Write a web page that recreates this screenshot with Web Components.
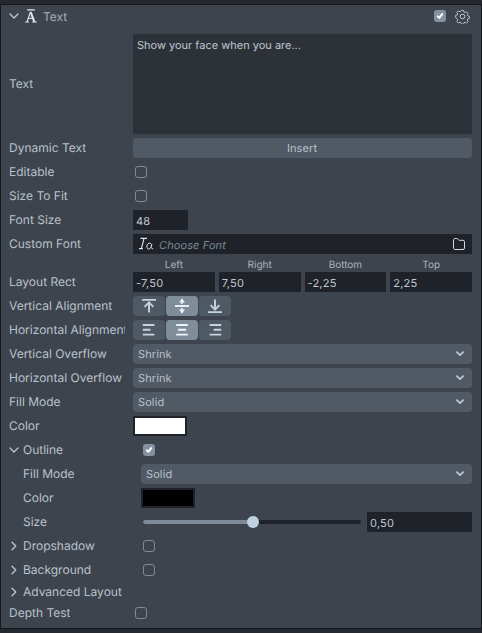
<!DOCTYPE html>
<html><head><meta charset="utf-8"><style>
html,body{margin:0;padding:0;height:100%;background:#25282e;overflow:hidden}
body{font:12px/16px Inter,"Noto Sans",sans-serif;color:#b9c1cb;text-rendering:geometricPrecision}
</style></head><body>
<insp-panel>
  <insp-header>Text</insp-header>
  <insp-row label="Text" h="100"><insp-area>Show your face when you are...</insp-area></insp-row>
  <insp-row label="Dynamic Text"><insp-button>Insert</insp-button></insp-row>
  <insp-row label="Editable"><insp-check></insp-check></insp-row>
  <insp-row label="Size To Fit"><insp-check></insp-check></insp-row>
  <insp-row label="Font Size"><insp-input w="55">48</insp-input></insp-row>
  <insp-row label="Custom Font"><insp-font></insp-font></insp-row>
  <insp-rect></insp-rect>
  <insp-row label="Vertical Alignment"><insp-seg kind="v"></insp-seg></insp-row>
  <insp-row label="Horizontal Alignment"><insp-seg kind="h"></insp-seg></insp-row>
  <insp-row label="Vertical Overflow"><insp-select>Shrink</insp-select></insp-row>
  <insp-row label="Horizontal Overflow"><insp-select>Shrink</insp-select></insp-row>
  <insp-row label="Fill Mode"><insp-select>Solid</insp-select></insp-row>
  <insp-row label="Color"><insp-color value="#fff"></insp-color></insp-row>
  <insp-row label="Outline" fold="open" indent="1"><insp-check checked></insp-check></insp-row>
  <insp-row label="Fill Mode" indent="1"><insp-select>Solid</insp-select></insp-row>
  <insp-row label="Color" indent="1"><insp-color value="#000"></insp-color></insp-row>
  <insp-row label="Size" indent="1"><insp-slider></insp-slider></insp-row>
  <insp-row label="Dropshadow" fold="closed" indent="1"><insp-check></insp-check></insp-row>
  <insp-row label="Background" fold="closed" indent="1"><insp-check></insp-check></insp-row>
  <insp-row label="Advanced Layout" fold="closed" indent="1" rh="20"></insp-row>
  <insp-row label="Depth Test" rh="22"><insp-check></insp-check></insp-row>
</insp-panel>
<script>
const def=(name,css,html,init)=>customElements.define(name,class extends HTMLElement{
  connectedCallback(){ if(this.shadowRoot)return; const r=this.attachShadow({mode:'open'});
    r.innerHTML='<style>'+css+'</style>'+(typeof html==='function'?html(this):html); if(init)init(this,r);}
});
const chev='<svg width="10" height="10" viewBox="0 0 10 10" fill="none" stroke="#bfc7d1" stroke-width="1.3" stroke-linecap="round" stroke-linejoin="round"><path d="M1 3 5 7 9 3"/></svg>';
const chevR='<svg width="10" height="10" viewBox="0 0 10 10" fill="none" stroke="#bfc7d1" stroke-width="1.3" stroke-linecap="round" stroke-linejoin="round"><path d="M3 1.2 6.8 5 3 8.8"/></svg>';
const chevS='<svg width="8" height="6" viewBox="0 0 8 6" fill="none" stroke="#bcc8d6" stroke-width="1.7" stroke-linecap="round" stroke-linejoin="round"><path d="M.9 1.2 4 4.2 7.1 1.2"/></svg>';
const tick='<svg width="12" height="12" viewBox="0 0 12 12" fill="none" stroke="#fff" stroke-width="1.9" stroke-linecap="round" stroke-linejoin="round"><path d="M3.8 6.3 5.3 7.8 8.2 4.1"/></svg>';
def('insp-panel',`:host{display:block;margin:4px 0 0;height:625px;box-sizing:border-box;background:#3e444d;border:1px solid #15171a}
  .b{display:flex;flex-direction:column}`,'<div class="b"><slot></slot></div>');
def('insp-header',`:host{display:flex;align-items:center;height:27px;box-sizing:border-box;padding:0 11px 5px 8px;color:#a6afba}
  .t{margin-left:6px;padding-top:1px}.a{margin-left:6px;display:block}.sp{flex:1}.g{display:block;margin-left:9px}
  .c{width:12px;height:12px;border-radius:3px;background:#8591a0;display:flex;align-items:center;justify-content:center}`,
  `${chev}<svg class="a" width="12" height="14" viewBox="0 0 12 14" fill="none" stroke="#e4e8ec"><path d="M2.2 .9h7.6" stroke-width="1.3"/><path d="M.2 13h3.8M7.2 13h4.6" stroke-width="1.2"/><path d="M2 13 5.3 3.3h.9" stroke-width="1.1"/><path d="M5.8 3.3 9.4 13" stroke-width="2.1"/><path d="M3.2 9.3h5" stroke-width="1.1"/></svg><span class="t"><slot></slot></span><span class="sp"></span>
  <span class="c">${tick}</span>
  <svg class="g" width="15" height="15" viewBox="0 0 15 15" fill="none" stroke="#bfc7d1" stroke-width="1"><circle cx="7.5" cy="7.5" r="2.3"/><path d="M6.3 1h2.4l.4 1.7 1.3.6 1.5-.9 1.7 1.7-.9 1.5.5 1.3 1.8.4v2.4l-1.8.4-.5 1.3.9 1.5-1.7 1.7-1.5-.9-1.3.5-.4 1.7H6.3l-.4-1.7-1.3-.5-1.5.9-1.7-1.7.9-1.5-.5-1.3L0 8.7V6.3l1.8-.4.5-1.3-.9-1.5 1.7-1.7 1.5.9 1.3-.6z" transform="translate(.6 .6) scale(.92)"/></svg>`);
def('insp-row',`:host{display:flex;align-items:center;min-height:24px;padding:0 9px 0 8px;box-sizing:border-box}
  .l{flex:0 0 124px;width:124px;display:flex;align-items:center}
  .n{display:block;max-width:116px;overflow:hidden;white-space:nowrap}
  .f{flex:0 0 10px;width:10px;margin-right:4px;display:block}.f svg{display:block}
  .v{flex:1;display:flex;align-items:center;min-width:0}`,
  h=>{const ind=h.hasAttribute('indent');const fold=h.getAttribute('fold');
    return `<div class="l">${ind?`<span class="f">${fold==='open'?chev:fold==='closed'?chevR:''}</span>`:''}<span class="n">${h.getAttribute('label')}</span></div><div class="v"${ind?' style="margin-left:8px"':''}><slot></slot></div>`},
  (h)=>{const a=h.getAttribute('h');if(a)h.style.height=(+a+4)+'px';const rh=h.getAttribute('rh');if(rh){h.style.minHeight=rh+'px';h.style.height=rh+'px'}});
def('insp-area',`:host{display:block;flex:1;height:100px;box-sizing:border-box;background:#2d3138;padding:3px 4px;color:#bfc7d1;font-size:11px}`,'<slot></slot>');
def('insp-button',`:host{display:flex;flex:1;height:20px;align-items:center;justify-content:center;background:#515a64;border-radius:4px;font-size:11px;padding-right:1px;box-sizing:border-box;letter-spacing:.01em}`,'<slot></slot>');
def('insp-check',`:host{display:flex;align-items:center;justify-content:center;width:12px;height:12px;margin-left:2px;box-sizing:border-box;border-radius:3px;border:1.5px solid #7f8a98}
  :host([checked]){background:#8591a0;border:0}`,h=>h.hasAttribute('checked')?tick:'');
def('insp-input',`:host{display:flex;align-items:center;height:20px;box-sizing:border-box;background:#1f2329;padding:1px 3px 0;font-size:11px;letter-spacing:.02em;color:#bfc7d1;flex:1;min-width:0}`,'<slot></slot>',h=>{const w=h.getAttribute('w');if(w){h.style.flex='0 0 '+w+'px'}});
def('insp-font',`:host{display:flex;flex:1;align-items:center;height:20px;background:#1f2329;padding:0 7px 0 6px;box-sizing:border-box}
  i{font-size:11px;color:#7d8793;margin-left:5px;padding-top:1px;flex:1;letter-spacing:.01em}svg{display:block}`,
  `<svg width="15" height="14" viewBox="0 0 15 14" fill="none" stroke="#e4e8ec"><path d="M1.5 1.4h6.5M0 11.6h3.8M5 1.4 2.4 11.6" stroke-width="1.1"/><path d="M12.6 7.4c-.8-1.3-2.5-1.6-3.6-.7-1.3 1-1.5 3.8-.4 4.9 1 .9 2.6.3 3.4-1.3l.9-3.2M12 10.1c.1 1 .8 1.7 2.2 1.6" stroke-width="1"/></svg><i>Choose Font</i>
  <svg width="12" height="12" viewBox="0 0 12 12" fill="none" stroke="#d5dbe2" stroke-width="1"><path d="M.5 2c0-.9.6-1.5 1.4-1.5h2c.6 0 .9.3 1.2.8l.4.6c.2.3.4.4.8.4h3.8c.9 0 1.4.6 1.4 1.4v6.3c0 1-.6 1.5-1.5 1.5H2c-.9 0-1.5-.5-1.5-1.5z"/></svg>`);
def('insp-rect',`:host{display:block;padding:0 9px 0 8px}
  .h,.r{display:grid;grid-template-columns:120px repeat(4,1fr);column-gap:4px}
  .h{height:16px;font-size:10px;color:#aab3be;text-align:center;line-height:16px;padding-top:1px;box-sizing:border-box}
  .r{align-items:center;height:20px;margin-bottom:2px}`,
  `<div class="h"><span></span><span>Left</span><span>Right</span><span>Bottom</span><span>Top</span></div>
   <div class="r"><span>Layout Rect</span><insp-input>-7,50</insp-input><insp-input>7,50</insp-input><insp-input>-2,25</insp-input><insp-input>2,25</insp-input></div>`);
const icons={
 v:[`<path d="M3 3.9h14M10 16.5V7"/><path d="M5.6 10.8 10 6.3l4.4 4.5" fill="none"/>`,
    `<path d="M3 10h14"/><path d="M10 3v5M10 17v-5" stroke-width="1.6"/><path d="M7 6.4h6L10 2.4zM7 13.6h6L10 17.6z" fill="#eef3f7" stroke="none"/>`,
    `<path d="M3 16.1h14M10 3.5V13"/><path d="M5.6 9.2 10 13.7l4.4-4.5" fill="none"/>`],
 h:[`<path d="M3.8 5h11.6M3.8 9.8h7.6M3.8 14.6h11.6"/>`,`<path d="M4.2 5h11.6M6 9.8h8M4.2 14.6h11.6"/>`,`<path d="M4.6 5h11.6M8.6 9.8h7.6M4.6 14.6h11.6"/>`]};
def('insp-seg',`:host{display:flex;gap:1px}
  span{display:flex;align-items:center;justify-content:center;width:32px;height:20px;background:#4f5964;border-radius:4px}
  span.on{background:#7f8c9a}svg{display:block}`,
  h=>icons[h.getAttribute('kind')].map((p,i)=>`<span class="${i==1?'on':''}"><svg width="20" height="20" viewBox="0 0 20 20" fill="none" stroke="${i==1?'#eef3f7':'#c6d3de'}" stroke-width="1.9">${p}</svg></span>`).join(''));
def('insp-select',`:host{display:flex;flex:1;align-items:center;height:20px;background:#515a64;border-radius:4px;padding:0 8px 0 5px;box-sizing:border-box;font-size:11px;letter-spacing:.01em}
  .t{flex:1}svg{display:block}`,`<span class="t"><slot></slot></span>${chevS}`);
def('insp-color',`:host{display:block;width:54px;height:20px;box-sizing:border-box;border:2px solid #1f2329}`,'',h=>h.style.background=h.getAttribute('value'));
def('insp-slider',`:host{display:flex;flex:1;align-items:center;gap:6px;min-width:0;padding-left:2px}
  .t{position:relative;flex:1;height:4px;border-radius:2px;background:#1f2329}
  .f{height:4px;width:110px;border-radius:2px;background:#7f8a98}
  .k{position:absolute;left:104px;top:-4px;width:12px;height:12px;border-radius:50%;background:#c0d0de}`,
  `<div class="t"><div class="f"></div><div class="k"></div></div><insp-input style="flex:0 0 105px">0,50</insp-input>`);
</script>
</body></html>
